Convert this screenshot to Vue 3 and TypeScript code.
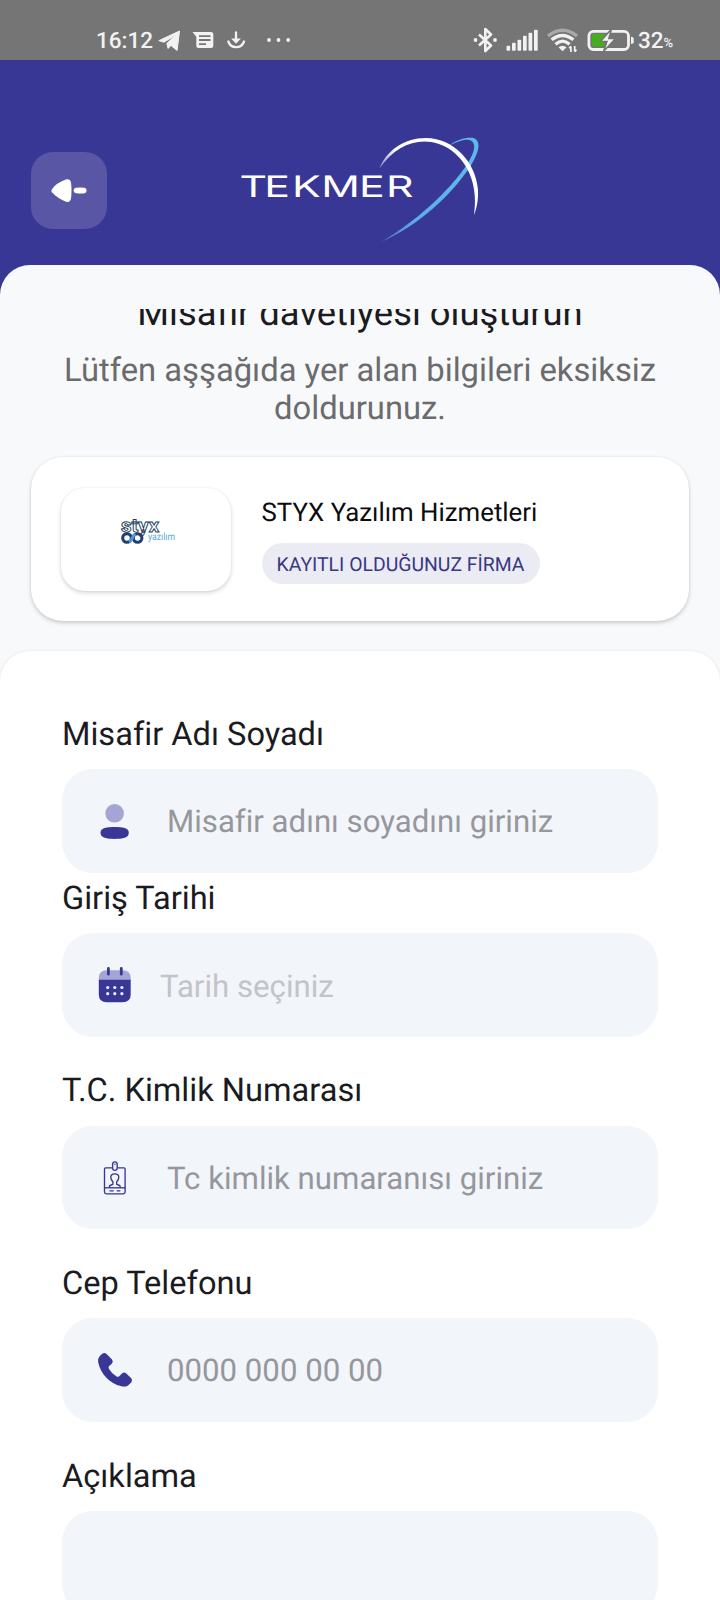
<script setup lang="ts">
type IconName = 'user' | 'calendar' | 'idcard' | 'phone' | 'none'

interface Field {
  label: string
  placeholder: string
  icon: IconName
  tight?: boolean
  muted?: boolean
}

const fields: Field[] = [
  { label: 'Misafir Adı Soyadı', placeholder: 'Misafir adını soyadını giriniz', icon: 'user', tight: true },
  { label: 'Giriş Tarihi', placeholder: 'Tarih seçiniz', icon: 'calendar', muted: true },
  { label: 'T.C. Kimlik Numarası', placeholder: 'Tc kimlik numaranısı giriniz', icon: 'idcard' },
  { label: 'Cep Telefonu', placeholder: '0000 000 00 00', icon: 'phone' },
  { label: 'Açıklama', placeholder: '', icon: 'none' },
]

const bars = [5, 8, 11, 15, 18, 21]
</script>

<template>
  <div class="screen">
    <div class="status">
      <div class="status-left">
        <span class="clock">16:12</span>
        <svg class="s-icons" width="140" height="30" viewBox="0 0 140 30" fill="#f2f2f2">
          <path d="M2.8 15.7 23.5 6 21.1 25.4 14.9 20.4 12.1 23.5 10.8 18.5 19.5 10 8 17.2z" stroke="#f2f2f2" stroke-width="1" stroke-linejoin="round" />
          <path fill-rule="evenodd" d="M36.5 7H55Q57.3 7 57.3 9V21Q57.3 23 55 23H42.5Q40.3 23 40.3 21V11.8ZM43 10.2V12H54.5V10.2ZM43 14.1V15.9H54.5V14.1ZM43 18.2V19.9H50V18.2Z" />
          <g fill="none" stroke="#f2f2f2" stroke-width="2.3" stroke-linecap="round">
            <path d="M80 7.5V16" />
            <path d="M72.3 16.5Q74.3 22.2 80.1 22.2T88 16.5" />
          </g>
          <path d="M75.1 13.5H85L80 18.8z" />
          <circle cx="113" cy="15" r="1.9" /><circle cx="122.5" cy="15" r="1.9" /><circle cx="132.2" cy="15" r="1.9" />
        </svg>
      </div>
      <div class="status-right">
        <svg width="168" height="32" viewBox="0 0 168 32">
          <path d="M6 10.5 18 21.5 12.3 27V5L18 10.5 6 21.5" fill="none" stroke="#f2f2f2" stroke-width="2.6" stroke-linejoin="round" />
          <circle cx="2.5" cy="16" r="1.9" fill="#f2f2f2" /><circle cx="22" cy="16" r="1.9" fill="#f2f2f2" />
          <rect v-for="(h, i) in bars" :key="i" :x="33.5 + i * 5.5" :y="26.8 - h" width="3.7" :height="h" rx="1" fill="#f2f2f2" />
          <g fill="none" stroke="#f2f2f2" stroke-linecap="butt">
            <path d="M75 12Q89.5 .5 104 12" stroke="#a9a9a9" stroke-width="3.2" />
            <path d="M78.6 15.8Q89.5 7 100.4 15.8" stroke-width="3.4" />
            <path d="M82.5 20.3Q89.5 14 96.6 20.3" stroke-width="3.2" />
          </g>
          <path d="M85.5 23.3Q89.5 20.2 93.5 23.3L89.5 27.2z" fill="#f2f2f2" />
          <path d="M97.9 28V22.5M96.2 24.3 97.9 22.3M101.7 22V27.5M103.5 25.7 101.7 27.7" stroke="#f2f2f2" stroke-width="1.7" fill="none" />
          <rect x="115.9" y="7.3" width="39.6" height="18.2" rx="4.5" fill="none" stroke="#f2f2f2" stroke-width="2.8" />
          <path d="M119 10H131.5V22.5H119z" fill="#46ad1c" />
          <path d="M138.5 5 127.5 17.5H134L130.5 27.5 142.5 14.6H135.8z" fill="#f2f2f2" stroke="#757575" stroke-width="1.5" />
          <path d="M158 12.7Q160.7 12.7 160.7 14.5V18.3Q160.7 20 158 20z" fill="#f2f2f2" />
        </svg>
        <span class="battery">32</span><span class="percent">%</span>
      </div>
    </div>

    <header class="header">
      <button class="back" aria-label="Geri">
        <svg width="36" height="26" viewBox="0 0 36 26" fill="#fff">
          <path d="M1.1 11Q5 5 14.8 1.4Q19.2 .2 20 4.5Q21 12.5 20 20.5Q19.2 25 15 23.7Q6.5 20.5 1.1 14.6Q-.3 12.8 1.1 11z" />
          <path d="M24.8 9.8Q30 9.3 33.7 9.8Q35.6 10.3 35.6 12.5T33.7 15.3Q30 15.8 24.8 15.2Q22.6 14.7 22.6 12.5T24.8 9.8z" />
        </svg>
      </button>
      <svg class="brand" width="250" height="118" viewBox="0 0 250 118">
        <defs>
          <linearGradient id="tail" x1="0" y1="1" x2=".65" y2=".35">
            <stop offset="0" stop-color="#5277c4" /><stop offset=".4" stop-color="#5daaea" /><stop offset="1" stop-color="#5bb8ec" />
          </linearGradient>
          <linearGradient id="arc" x1="0" y1="0" x2="1" y2="0">
            <stop offset="0" stop-color="#8f8dc8" /><stop offset=".16" stop-color="#fff" /><stop offset="1" stop-color="#fff" />
          </linearGradient>
        </defs>
        <g class="brand-text" transform="scale(1.45 1)">
          <text x="3.8 20.8 40 60.2 86.2 104.8" y="72.2">TEKMER</text>
        </g>
        <path fill="url(#tail)" d="M148 116.5C182 96 213.5 68 233 39.5C241 27 243 17.5 235.5 15C230.5 13.6 223.5 16.6 215.5 20.3C223 14.6 232 12 238.5 12.8C248 15 245.5 27 236 42C217 70 185 100.5 148 116.5z" />
        <path fill="url(#arc)" d="M145.5 43.5C152 26 170 13 192 13C220 13.3 241.5 37 243.9 64C244.6 74 243 82.5 240 90C244 63 236 39.5 217.5 25.5C194 9 164.5 15.5 145.5 43.5z" />
      </svg>
    </header>

    <main class="sheet">
      <div class="scroll">
        <h1 class="title">Misafir davetiyesi oluşturun</h1>
        <p class="subtitle">Lütfen aşşağıda yer alan bilgileri eksiksiz<br />doldurunuz.</p>

        <section class="company">
          <div class="company-logo">
            <svg width="60" height="34" viewBox="0 0 60 34">
              <text class="styx" x="2" y="18" textLength="38" lengthAdjust="spacingAndGlyphs">styx</text>
              <g fill="none" stroke="#203f73" stroke-width="3.1">
                <circle cx="8" cy="24" r="4.3" />
                <circle cx="18.6" cy="24" r="4.3" />
              </g>
              <path d="M10 27.9Q12.4 26.9 13.3 24Q14.3 21.1 16.6 20.1" fill="none" stroke="#4b9bd4" stroke-width="3" />
              <text class="yazilim" x="29" y="25.5" textLength="27" lengthAdjust="spacingAndGlyphs">yazılım</text>
            </svg>
          </div>
          <div class="company-info">
            <div class="company-name">STYX Yazılım Hizmetleri</div>
            <div class="badge">KAYITLI OLDUĞUNUZ FİRMA</div>
          </div>
        </section>

        <form class="form">
          <div v-for="f in fields" :key="f.label" class="group" :class="{ tight: f.tight }">
            <label class="label">{{ f.label }}</label>
            <div class="field" :class="{ muted: f.muted }">
              <svg v-if="f.icon !== 'none'" class="icon" width="36" height="38" viewBox="0 0 36 38">
                <g v-if="f.icon === 'user'">
                  <circle cx="17.6" cy="10.3" r="9.3" fill="#a5a5d4" />
                  <path d="M17.7 24C25.5 24 31.8 24.5 31.8 29.8S25.5 35.9 17.7 35.9S3.5 35 3.5 29.8S9.9 24 17.7 24z" fill="#393795" />
                </g>
                <g v-else-if="f.icon === 'calendar'" transform="translate(0 -1.3)">
                  <path d="M1.8 14.7V12.5Q1.8 4.5 9.8 4.5H25.5Q33.7 4.5 33.7 12.5V14.7z" fill="#a5a5d4" />
                  <path d="M1.8 14H33.7V28.7Q33.7 36.5 25.5 36.5H9.8Q1.8 36.5 1.8 28.7z" fill="#393795" />
                  <path d="M11.4 2.8V8.5M24.3 2.8V8.5" stroke="#393795" stroke-width="2.8" stroke-linecap="round" />
                  <g fill="#eeeefa">
                    <circle cx="10.7" cy="21.8" r="1.6" /><circle cx="17.8" cy="21.8" r="1.6" /><circle cx="24.9" cy="21.8" r="1.6" />
                    <circle cx="10.7" cy="28" r="1.6" /><circle cx="17.8" cy="28" r="1.6" /><circle cx="24.9" cy="28" r="1.6" />
                  </g>
                </g>
                <g v-else-if="f.icon === 'idcard'" transform="translate(-.3 -1)" fill="none" stroke="#393795" stroke-width="1.35">
                  <path d="M15.7 8.9H8.8Q7.8 8.9 7.8 9.9V33Q7.8 34.8 9.6 34.8H26.6Q28.4 34.8 28.4 33V9.9Q28.4 8.9 27.4 8.9H20.7" />
                  <rect x="15.9" y="2.8" width="4.6" height="8.6" rx="2.3" />
                  <path d="M17.6 5.4H18.9" />
                  <path d="M7.8 28.8H28.4" />
                  <path d="M12.7 28.6V27.8Q12.7 26.3 14.4 26L16.2 25.3V22.8Q14.1 20.8 14.1 18.2Q14.1 14.8 18.1 14.8T22.1 18.2Q22.1 20.8 20 22.8V25.3L21.8 26Q23.5 26.3 23.5 27.8V28.6" />
                  <path d="M12.8 31.8H17M20 31.8H23.6" />
                </g>
                <path
                  v-else
                  fill="#393795"
                  d="M2.6 4.3 5.5 1.6Q7.6 .2 9.6 2L15 7.6Q16.6 9.5 15 11.4L11.9 14.3Q11.1 15.5 12 17Q15 22 19.6 24.6Q21.2 25.2 22.2 24.3L25 21.4Q27 19.7 29 21.3L34.3 26.3Q36 28.3 34.3 30.4L31 33.4Q28.4 35.2 24.5 34.3C12.5 31.3 3.5 21.5 1.2 10.4Q.5 6.6 2.6 4.3z"
                />
              </svg>
              <span class="placeholder">{{ f.placeholder }}</span>
            </div>
          </div>
        </form>
      </div>
    </main>
  </div>
</template>

<style>
body {
  margin: 0;
}
</style>

<style scoped>
.screen {
  width: 720px;
  height: 1600px;
  overflow: hidden;
  display: flex;
  flex-direction: column;
  background: #393795;
  font-family: Roboto, 'Liberation Sans', sans-serif;
  font-variant-ligatures: none;
  text-rendering: geometricPrecision;
}
.status {
  height: 60px;
  flex: none;
  box-sizing: border-box;
  padding: 24px 45.5px 0 96px;
  display: flex;
  justify-content: space-between;
  background: #757575;
  color: #f2f2f2;
}
.status-left,
.status-right {
  display: flex;
  height: 32px;
}
.clock {
  width: 60px;
  font-size: 22.5px;
  font-weight: 500;
  line-height: 35px;
}
.s-icons {
  margin-top: 1px;
}
.status-right svg {
  flex: none;
}
.battery {
  margin-left: -3px;
  font-size: 22.5px;
  font-weight: 500;
  line-height: 34px;
}
.percent {
  width: 11px;
  font-size: 13px;
  font-weight: 500;
  line-height: 39px;
}
.header {
  height: 204.5px;
  flex: none;
  box-sizing: border-box;
  display: flex;
  padding-left: 31px;
}
.back {
  width: 76px;
  height: 77px;
  margin-top: 92px;
  padding: 0;
  border: 0;
  border-radius: 22px;
  background: #5956a6;
  display: flex;
  align-items: center;
  justify-content: center;
}
.brand {
  margin: 65px 0 0 127px;
}
.brand-text {
  font-family: Inter, sans-serif;
  font-size: 29.5px;
  font-weight: 400;
  fill: #fff;
}
.sheet {
  flex: 1;
  min-height: 0;
  box-sizing: border-box;
  padding-top: 44.5px;
  border-radius: 30px 30px 0 0;
  background: #f8f9fb;
  overflow: hidden;
}
.scroll {
  height: 1291px;
  overflow: hidden;
}
.title {
  margin: -17.5px 0 0;
  font-size: 36.4px;
  line-height: 42px;
  font-weight: 400;
  text-align: center;
  color: #1b1b1f;
}
.subtitle {
  margin: 17px 0 0;
  font-size: 32.75px;
  line-height: 38px;
  text-align: center;
  color: #6b6b6e;
}
.company {
  width: 658px;
  height: 164px;
  margin: 30.5px 0 0 31px;
  box-sizing: border-box;
  padding: 31px 30px;
  border-radius: 32px;
  background: #fff;
  box-shadow: 0 2px 4px rgba(0, 0, 0, 0.18), 0 0 2px rgba(0, 0, 0, 0.08);
  display: flex;
}
.company-logo {
  width: 170px;
  height: 103px;
  flex: none;
  border-radius: 24px;
  background: #fff;
  box-shadow: 0 2px 4px rgba(0, 0, 0, 0.16), 0 0 2px rgba(0, 0, 0, 0.07);
}
.company-logo svg {
  display: block;
  margin: 26px 0 0 58px;
}
.styx {
  font-size: 19px;
  font-weight: 700;
  fill: #fff;
  stroke: #233b5c;
  stroke-width: 0.9px;
}
.yazilim {
  font-size: 10px;
  fill: #58a9d6;
}
.company-info {
  margin-left: 30.5px;
}
.company-name {
  margin-top: 9.5px;
  font-size: 25.8px;
  line-height: 30px;
  color: #0c0c0e;
}
.badge {
  width: 278px;
  height: 41px;
  margin-top: 15.5px;
  border-radius: 20.5px;
  background: #ebebf3;
  color: #393783;
  font-size: 19.4px;
  line-height: 43px;
  text-align: center;
  white-space: nowrap;
}
.form {
  height: 1000px;
  margin-top: 30px;
  box-sizing: border-box;
  padding: 58.3px 62px 0;
  border-radius: 30px 30px 0 0;
  background: #fff;
  box-shadow: 0 0 3px rgba(0, 0, 0, 0.1);
}
.group {
  margin-bottom: 29px;
}
.group.tight {
  margin-bottom: 0;
}
.label {
  display: block;
  height: 60px;
  box-sizing: border-box;
  padding-top: 5.6px;
  font-size: 32.6px;
  line-height: 38px;
  color: #1b1b1f;
}
.field {
  height: 103.7px;
  box-sizing: border-box;
  padding-top: 2px;
  border-radius: 31px;
  background: #f2f5fa;
  display: flex;
  align-items: center;
}
.icon {
  flex: none;
  margin-left: 35px;
}
.placeholder {
  margin-left: 34px;
  font-size: 31.2px;
  line-height: 36px;
  color: #96979c;
}
.muted .placeholder {
  margin: 2px 0 0 27px;
  color: #c3c4c8;
}
</style>
